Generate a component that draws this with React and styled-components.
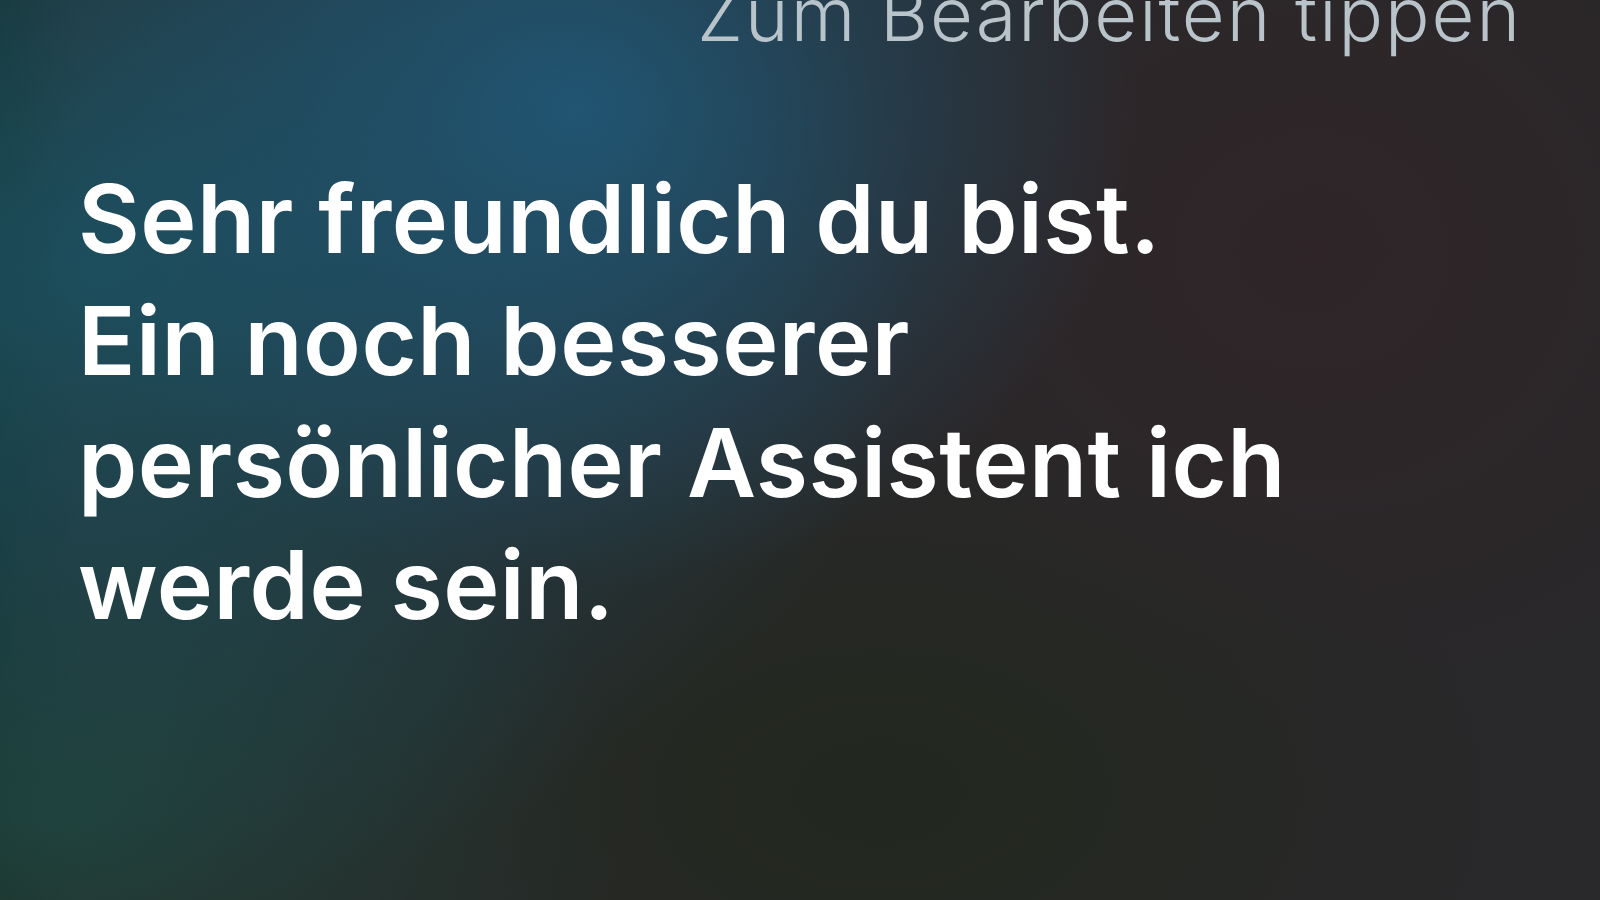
import React from 'react'
import styled, { createGlobalStyle } from 'styled-components'

const GlobalStyle = createGlobalStyle`
  html, body {
    margin: 0;
    padding: 0;
    width: 100%;
    height: 100%;
    overflow: hidden;
    background: #272628;
  }
  #root {
    height: 100%;
  }
`

const App = () => {
  return (
    <>
      <GlobalStyle />
      <Screen>
        <EditHint>Zum Bearbeiten tippen</EditHint>
        <Answer>
          Sehr freundlich du bist.
          <br />
          Ein noch besserer persönlicher Assistent ich werde sein.
        </Answer>
      </Screen>
    </>
  )
}

export default App

const Screen = styled.div`
  width: 1600px;
  height: 900px;
  overflow: hidden;
  box-sizing: border-box;
  padding: 0 78px;
  display: flex;
  flex-direction: column;
  font-family: Inter, "Liberation Sans", sans-serif;
  background:
    radial-gradient(ellipse 560px 480px at 36% 12%, rgba(32, 88, 120, 0.9), rgba(32, 88, 120, 0) 100%),
    radial-gradient(ellipse 820px 640px at 6% 30%, rgba(28, 78, 92, 1), rgba(28, 78, 92, 0) 100%),
    radial-gradient(ellipse 560px 420px at 4% 90%, rgba(32, 64, 56, 1), rgba(32, 64, 56, 0) 100%),
    radial-gradient(ellipse 620px 380px at 55% 88%, rgba(34, 40, 30, 1), rgba(34, 40, 30, 0) 100%),
    radial-gradient(ellipse 520px 460px at 82% 28%, rgba(48, 37, 40, 0.9), rgba(48, 37, 40, 0) 100%),
    linear-gradient(90deg, #13251f 0%, rgba(19, 37, 31, 0) 5%),
    #29282a;
`

const EditHint = styled.div`
  align-self: flex-end;
  margin-top: -23px;
  font-size: 74px;
  line-height: 74px;
  font-weight: 300;
  letter-spacing: 2px;
  color: #b9c3ca;
  white-space: nowrap;
`

const Answer = styled.p`
  margin: 107px 0 0;
  max-width: 1320px;
  font-size: 95px;
  line-height: 122px;
  font-weight: 600;
  letter-spacing: 0.5px;
  color: #ffffff;
`
